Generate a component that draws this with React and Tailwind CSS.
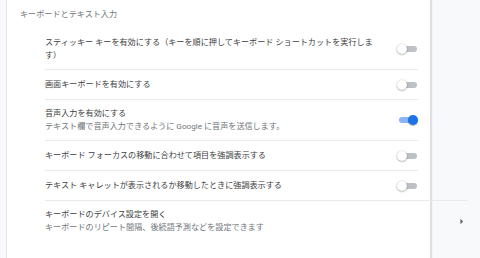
import React from "react";

function Toggle({ on }) {
  return (
    <div className="relative w-[21px] h-[10px] shrink-0 ml-[16px]">
      <div
        className={
          "absolute left-[2px] top-[2px] w-[18px] h-[6px] rounded-full " +
          (on ? "bg-[#8ab4f8]" : "bg-[#bdc1c6]")
        }
      />
      <div
        className={
          "absolute top-0 w-[10px] h-[10px] rounded-full " +
          (on
            ? "left-[11px] bg-[#1a73e8] shadow-[0_1px_1px_rgba(0,0,0,0.3)]"
            : "left-0 bg-white shadow-[0_0.5px_2px_rgba(0,0,0,0.45)]")
        }
      />
    </div>
  );
}

function Row({ title, sub, on, first, tall }) {
  return (
    <div
      className={
        "flex items-center w-[373px] " +
        (first ? "" : "border-t border-[#e8eaed] ") +
        (tall ? "h-[41px]" : "h-[30px]")
      }
    >
      <div className="flex-1 min-w-0">
        <div className="text-[#3c4043]">{title}</div>
        {sub && <div className="text-[#70757a]">{sub}</div>}
      </div>
      <Toggle on={on} />
    </div>
  );
}

export default function App() {
  return (
    <div
      className="w-[480px] h-[258px] overflow-hidden bg-[#f8f9fa] flex text-[8.125px] leading-[13px]"
      style={{ fontFamily: 'Roboto, "Noto Sans CJK JP", sans-serif' }}
    >
      <div className="w-[7px] h-full border-r border-[#e3e4e6]" />
      <div className="w-[424px] h-full bg-white border-r border-[#dcdde0] shadow-[1px_0_1px_rgba(60,64,67,0.12)]">
        <div className="h-[28px] flex items-center pl-[13px] text-[#70757a]">
          キーボードとテキスト入力
        </div>
        <div className="pl-[38px] flex flex-col">
          <Row
            first
            tall
            title="スティッキー キーを有効にする（キーを順に押してキーボード ショートカットを実行します）"
          />
          <Row title="画面キーボードを有効にする" />
          <Row
            tall
            on
            title="音声入力を有効にする"
            sub="テキスト欄で音声入力できるように Google に音声を送信します。"
          />
          <Row title="キーボード フォーカスの移動に合わせて項目を強調表示する" />
          <Row title="テキスト キャレットが表示されるか移動したときに強調表示する" />
          <div className="flex items-center w-[423px] h-[41px] border-t border-[#e8eaed]">
            <div className="flex-1 min-w-0">
              <div className="text-[#3c4043]">キーボードのデバイス設定を開く</div>
              <div className="text-[#70757a]">
                キーボードのリピート間隔、後続語予測などを設定できます
              </div>
            </div>
            <svg
              width="13"
              height="13"
              viewBox="0 0 24 24"
              className="shrink-0"
            >
              <path d="M10 17l5-5-5-5v10z" fill="#5f6368" />
            </svg>
          </div>
        </div>
      </div>
    </div>
  );
}
